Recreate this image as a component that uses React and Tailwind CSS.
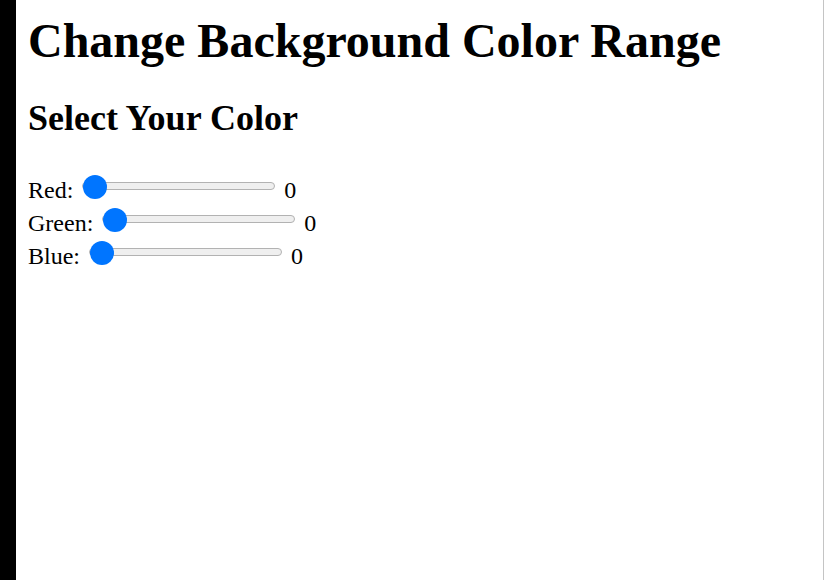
import React, { useState } from 'react';

const sliderClass =
  "block w-[193px] h-[24px] appearance-none bg-transparent cursor-pointer " +
  "[&::-webkit-slider-runnable-track]:h-[8px] [&::-webkit-slider-runnable-track]:rounded-full [&::-webkit-slider-runnable-track]:bg-[#efefef] [&::-webkit-slider-runnable-track]:border [&::-webkit-slider-runnable-track]:border-solid [&::-webkit-slider-runnable-track]:border-[#b2b2b2] " +
  "[&::-webkit-slider-thumb]:appearance-none [&::-webkit-slider-thumb]:w-[24px] [&::-webkit-slider-thumb]:h-[24px] [&::-webkit-slider-thumb]:rounded-full [&::-webkit-slider-thumb]:bg-[#0075ff] [&::-webkit-slider-thumb]:mt-[-8px] [&::-webkit-slider-thumb]:border-0";

const ColorRow = ({ label, value, onChange }) => (
  <div className="flex items-start h-[33px]">
    <span className="leading-[28px] mt-[1.5px]">{label}</span>
    <input
      type="range"
      min="0"
      max="255"
      value={value}
      onChange={(e) => onChange(Number(e.target.value))}
      className={sliderClass + " ml-[9px]"}
    />
    <span className="leading-[28px] mt-[1.5px] ml-[9px]">{value}</span>
  </div>
);

export default function App() {
  const [red, setRed] = useState(0);
  const [green, setGreen] = useState(0);
  const [blue, setBlue] = useState(0);

  return (
    <div className="flex h-[580px] w-[824px] font-['Liberation_Serif',serif] text-black">
      <div className="w-4 bg-black" />
      <div className="flex-1 bg-white border-r border-[#c4c4c4] pl-3">
        <h1 className="text-[48px] font-bold leading-[55px] pt-[13px]">Change Background Color Range</h1>
        <h2 className="text-[36px] font-bold leading-[41px] mt-[30px]">Select Your Color</h2>
        <div className="mt-[35px] text-[24px]">
          <ColorRow label="Red:" value={red} onChange={setRed} />
          <ColorRow label="Green:" value={green} onChange={setGreen} />
          <ColorRow label="Blue:" value={blue} onChange={setBlue} />
        </div>
      </div>
    </div>
  );
}
